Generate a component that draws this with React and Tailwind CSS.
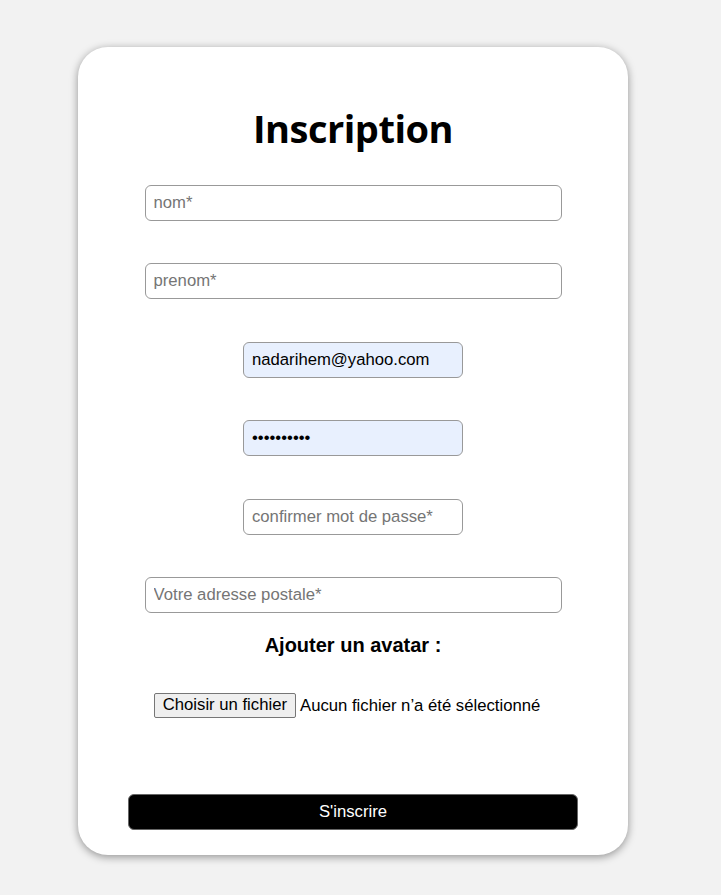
import { useState } from "react";

export default function App() {
  const [email, setEmail] = useState("nadarihem@yahoo.com");
  const [mdp, setMdp] = useState("motdepasse");

  const champ =
    "h-[36px] rounded-[6px] border border-[#999] px-[8px] text-[16.7px] text-black placeholder:text-[#757575] outline-none";

  return (
    <div className="min-h-[895px] bg-[#f2f2f2] pt-[47px] font-['Liberation_Sans',Arial,sans-serif]">
      <div className="ml-[78px] w-[550px] h-[808px] rounded-[30px] bg-white shadow-[0_2px_9px_rgba(0,0,0,0.4)] flex flex-col items-center">
        <h1 className="mt-[55px] text-[38px] leading-[52px] font-bold font-['Open_Sans',sans-serif] text-black tracking-[-0.5px]">
          Inscription
        </h1>

        <form className="flex flex-col items-center mt-[31px] gap-[42.4px]" onSubmit={(e) => e.preventDefault()}>
          <input type="text" placeholder="nom*" className={`${champ} w-[417px]`} />
          <input type="text" placeholder="prenom*" className={`${champ} w-[417px]`} />
          <input
            type="email"
            value={email}
            onChange={(e) => setEmail(e.target.value)}
            className={`${champ} w-[220px] bg-[#e8f0fe]`}
          />
          <input
            type="password"
            value={mdp}
            onChange={(e) => setMdp(e.target.value)}
            className={`${champ} w-[220px] bg-[#e8f0fe]`}
          />
          <input type="password" placeholder="confirmer mot de passe*" className={`${champ} w-[220px]`} />
        </form>

        <input type="text" placeholder="Votre adresse postale*" className={`${champ} w-[417px] mt-[42.4px]`} />

        <p className="mt-[20px] text-[20px] leading-[24px] font-bold text-black">Ajouter un avatar :</p>

        {/* champ fichier */}
        <div className="mt-[36px] flex items-center gap-[4px] text-[16.7px] text-black -ml-[12px]">
          <button className="h-[25px] px-[8px] bg-[#efefef] border border-[#767676] rounded-[2px] text-[16.7px] leading-[20px]">
            Choisir un fichier
          </button>
          <span>Aucun fichier n’a été sélectionné</span>
        </div>

        <button className="mt-[76px] w-[450px] h-[36px] rounded-[6px] bg-black border border-[#666] text-white text-[16.7px]">
          S'inscrire
        </button>
      </div>
    </div>
  );
}
